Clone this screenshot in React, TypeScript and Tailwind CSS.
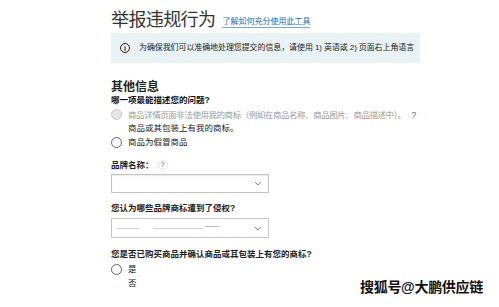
import React from "react";

const font = { fontFamily: '"Liberation Sans", "Noto Sans CJK SC", sans-serif' };

function Radio({ disabled }: { disabled?: boolean }) {
  return (
    <span
      className={
        "inline-block w-[11px] h-[11px] rounded-full border shrink-0 " +
        (disabled ? "border-[#c8c8c8] bg-[#e6e6e6]" : "border-[#5a6a7a] bg-white")
      }
    />
  );
}

function Chevron() {
  return (
    <svg width="8" height="5" viewBox="0 0 8 5" className="mr-[6px]">
      <path d="M1 1 L4 4 L7 1" fill="none" stroke="#8a8a8a" strokeWidth="1" />
    </svg>
  );
}

export default function App() {
  return (
    <div className="w-[499px] h-[307px] bg-white overflow-hidden relative" style={font}>
      <div className="pl-[111px] pt-[9px] flex flex-col">
        <div className="flex items-end h-[22px]">
          <span className="text-[18px] leading-[22px] text-[#333] tracking-[-0.6px]">举报违规行为</span>
          <span className="ml-[7px] mb-[3px] text-[8px] leading-[10px] text-[#2a6bb0] border-b border-[#7ea6d2]">了解如何充分使用此工具</span>
        </div>
        <div className="mt-[2px] w-[309px] h-[30px] bg-[#e9f2f4] flex items-center pl-[9px] overflow-hidden">
          <span className="w-[10px] h-[10px] rounded-full border border-[#222] flex items-center justify-center text-[7px] leading-none font-bold text-[#222] shrink-0">i</span>
          <span className="ml-[9px] text-[8px] leading-[10px] text-[#222] whitespace-nowrap tracking-[-0.1px]">为确保我们可以准确地处理您提交的信息，请使用 1) 英语或 2) 页面右上角语言</span>
        </div>
        <div className="mt-[18px] text-[12px] leading-[13px] font-bold text-[#222]">其他信息</div>
        <div className="text-[8.5px] leading-[12px] font-bold text-[#111]">哪一项最能描述您的问题?</div>
        <div className="mt-[2px] flex items-center h-[13px]">
          <Radio disabled />
          <span className="ml-[6px] text-[8.5px] leading-[12px] text-[#9a9a9a] whitespace-nowrap tracking-[-0.45px]">商品详情页面非法使用我的商标（例如在商品名称、商品图片、商品描述中）。 <span className="ml-[4px] text-[#666]">?</span></span>
        </div>
        <div className="h-[14px] flex items-center pl-[17px] text-[8.5px] leading-[12px] text-[#222]">商品或其包装上有我的商标。</div>
        <div className="flex items-center h-[14px]">
          <Radio />
          <span className="ml-[6px] text-[8.5px] leading-[12px] text-[#222]">商品为假冒商品</span>
        </div>
        <div className="mt-[10px] h-[12px] flex items-center text-[8.5px] font-bold text-[#222]">
          品牌名称：
          <span className="ml-[4px] w-[10px] h-[10px] rounded-full border border-[#e0e0e0] flex items-center justify-center text-[7px] font-normal text-[#555]">?</span>
        </div>
        <div className="mt-[3px] w-[158px] h-[19px] border border-[#c4c4c4] shadow-[inset_0_1px_1px_rgba(0,0,0,0.08)] flex items-center justify-end">
          <Chevron />
        </div>
        <div className="mt-[9px] h-[12px] flex items-center text-[8.5px] font-bold text-[#222]">您认为哪些品牌商标遭到了侵权?</div>
        <div className="mt-[4px] w-[158px] h-[20px] border border-[#c4c4c4] flex items-center">
          <span className="ml-[5px] w-[22px] h-[1px] bg-[#d0d0d0]" />
          <span className="ml-[14px] w-[50px] h-[1px] bg-[#d0d0d0]" />
          <span className="ml-[2px] w-[14px] h-[1px] bg-[#bcbcbc] -translate-y-[2px]" />
          <span className="flex-1" />
          <Chevron />
        </div>
        <div className="mt-[10px] h-[12px] flex items-center text-[8.5px] font-bold text-[#222] whitespace-nowrap">您是否已购买商品并确认商品或其包装上有您的商标?</div>
        <div className="mt-[2px] flex items-center h-[14px]">
          <Radio />
          <span className="ml-[6px] text-[8.5px] leading-[12px] text-[#222]">是</span>
        </div>
        <div className="h-[14px] flex items-center pl-[17px] text-[8.5px] leading-[12px] text-[#222]">否</div>
      </div>
      <div
        className="absolute left-[360px] top-[279px] text-[14px] leading-[16px] font-bold text-[#111] whitespace-nowrap tracking-[-0.3px]"
        style={{ textShadow: "0 0 2px #fff, 0 0 2px #fff, 1px 1px 0 #fff" }}
      >
        搜狐号@大鹏供应链
      </div>
    </div>
  );
}
